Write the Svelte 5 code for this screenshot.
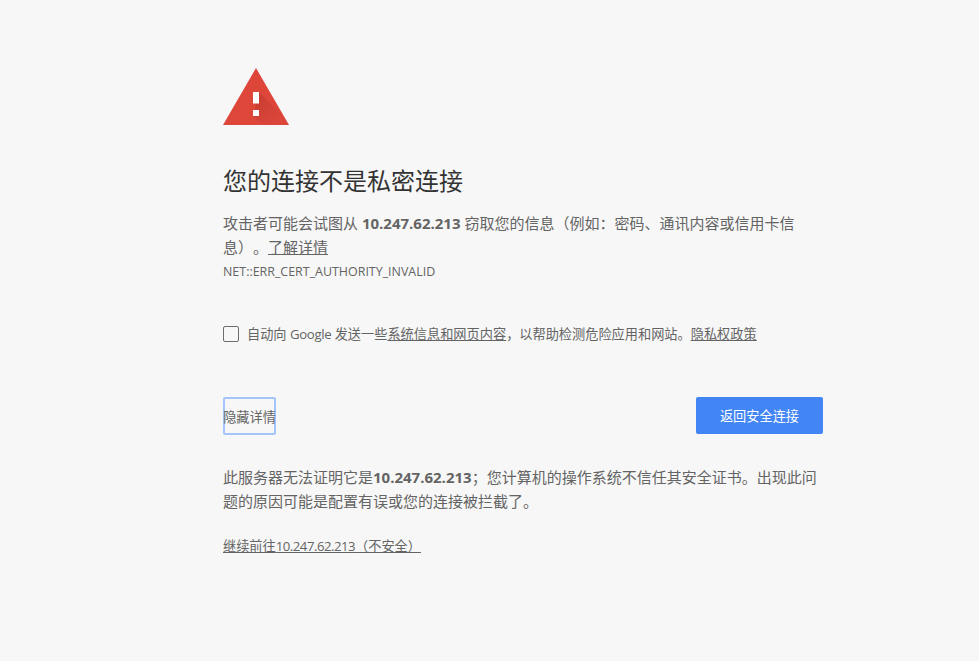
<script>
  let reporting = false;
  const host = '10.247.62.213';
</script>

<div class="wrapper">
  <svg class="icon" viewBox="0 0 66 57" width="66" height="57" aria-hidden="true">
    <defs>
      <linearGradient id="shade" x1="0.15" y1="0.15" x2="0.75" y2="0.75">
        <stop offset="0" stop-color="#b5352a" stop-opacity="0.5" />
        <stop offset="1" stop-color="#b5352a" stop-opacity="0.05" />
      </linearGradient>
    </defs>
    <path d="M33 0 L66 57 L0 57 Z" fill="#de463a" />
    <path d="M36 24 L62 50 L66 57 L39 57 L30 48 Z" fill="url(#shade)" />
    <rect x="30" y="24" width="6" height="11.5" fill="#fff" />
    <rect x="30" y="42" width="6" height="6" fill="#fff" />
  </svg>

  <h1>您的连接不是私密连接</h1>

  <p class="summary">攻击者可能会试图从 <strong>{host}</strong> 窃取您的信息（例如：密码、通讯内容或信用卡信息）。<a href="#learn">了解详情</a></p>
  <div class="code">NET::ERR_CERT_AUTHORITY_INVALID</div>

  <label class="report">
    <input type="checkbox" bind:checked={reporting} />
    <span class="box"></span>
    <span>自动向 <span class="tight">Google</span> 发送一些<a href="#info">系统信息和网页内容</a>，以帮助检测危险应用和网站。<a href="#privacy">隐私权政策</a></span>
  </label>

  <div class="actions">
    <button class="details">隐藏详情</button>
    <button class="primary">返回安全连接</button>
  </div>

  <p class="explain">此服务器无法证明它是<strong>{host}</strong>；您计算机的操作系统不信任其安全证书。出现此问题的原因可能是配置有误或您的连接被拦截了。</p>

  <p class="proceed"><a href="#proceed">继续前往<span class="ip">{host}</span>（不安全）</a></p>
</div>

<style>
  :global(body) {
    background: #f7f7f7;
    color: #646464;
    font-family: "Open Sans", "Noto Sans CJK SC", sans-serif;
    text-spacing-trim: space-all;
    overflow: hidden;
  }

  .wrapper {
    box-sizing: border-box;
    width: 600px;
    margin-left: 223px;
    padding-top: 68px;
    height: 661px;
  }

  .icon {
    display: block;
  }

  h1 {
    margin: 37px 0 0;
    color: #333;
    font-size: 24px;
    font-weight: 400;
    line-height: 38px;
  }

  .summary {
    margin: 11px 0 0;
    font-size: 15px;
    line-height: 24px;
  }

  a {
    color: #646464;
    text-decoration: underline;
  }

  .code {
    margin-top: 3px;
    font-size: 12.45px;
    line-height: 20px;
  }

  .report {
    display: flex;
    align-items: center;
    gap: 8px;
    margin-top: 41px;
    font-size: 13.2px;
    line-height: 22px;
  }

  .report input {
    display: none;
  }

  .tight {
    letter-spacing: -0.35px;
  }

  .box {
    box-sizing: border-box;
    flex: none;
    width: 16px;
    height: 16px;
    border: 1px solid #6e6e6e;
    border-radius: 2px;
  }

  .actions {
    display: flex;
    justify-content: space-between;
    align-items: flex-start;
    margin-top: 52px;
  }

  button {
    font-family: inherit;
    font-size: 13.2px;
    cursor: pointer;
  }

  .details {
    width: 53px;
    height: 38px;
    padding: 0;
    border: 0;
    border-radius: 2px;
    box-shadow: inset 0 0 0 2px #a3c4fb;
    background: transparent;
    color: #646464;
    white-space: nowrap;
  }

  .primary {
    width: 127px;
    height: 37px;
    padding: 0;
    border: 0;
    border-radius: 2px;
    background: #4285f4;
    color: #fff;
  }

  .explain {
    margin: 30px 0 0;
    font-size: 15px;
    line-height: 24px;
  }

  .proceed {
    margin: 21px 0 0;
    font-size: 13.2px;
    line-height: 24px;
  }

  .ip {
    letter-spacing: -0.5px;
  }
</style>
